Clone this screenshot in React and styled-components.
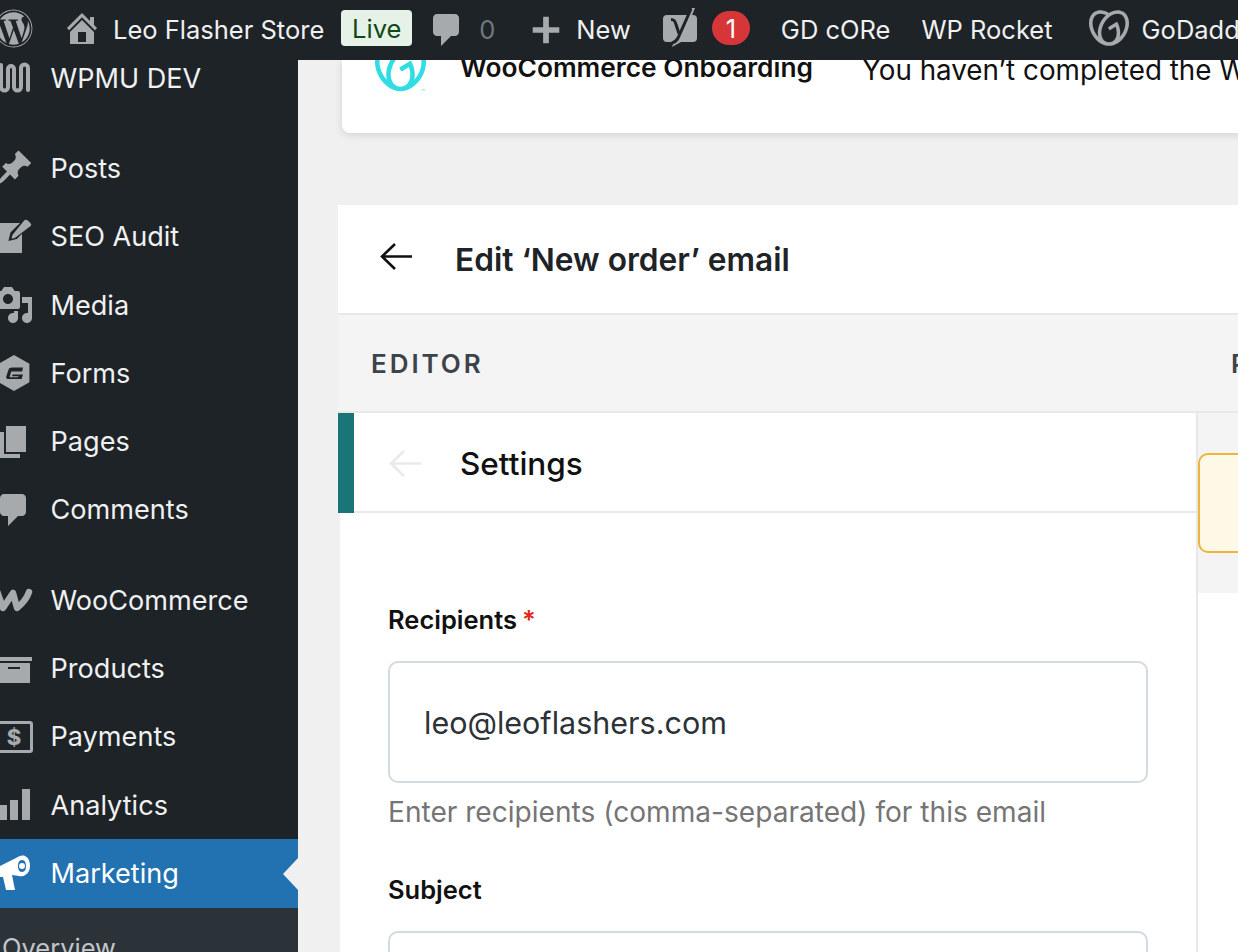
import React from "react";
import styled, { createGlobalStyle } from "styled-components";
import { FaWordpress } from "react-icons/fa";
import { SiGodaddy } from "react-icons/si";

const Global = createGlobalStyle`
  html, body { margin: 0; padding: 0; overflow: hidden; background: #f0f0f0; }
  * { box-sizing: border-box; }
  body { font-family: Inter, "Liberation Sans", sans-serif; }
`;

const Page = styled.div`
  width: 1238px;
  height: 952px;
  overflow: hidden;
  display: grid;
  grid-template-columns: 298px 940px;
  grid-template-rows: 60px 892px;
`;

const AdminBar = styled.header`
  grid-column: 1 / -1;
  background: #1d2327;
  color: #f0f0f1;
  display: flex;
  align-items: center;
  font-size: 25.5px;
  white-space: nowrap;
  overflow: hidden;
`;

const BarItem = styled.span`
  display: flex;
  align-items: center;
  flex: none;
  margin-top: -2px;
  margin-left: ${(p) => p.$ml || 0}px;
  color: ${(p) => p.$color || "#f0f0f1"};
`;

const BarIcon = styled.svg`
  flex: none;
  fill: #a7aaad;
  margin-left: ${(p) => p.$ml || 0}px;
  margin-top: ${(p) => p.$mt || 0}px;
`;

const WpLogo = styled(FaWordpress)`
  flex: none;
  margin-left: -6px;
  margin-top: -4px;
  color: #a7aaad;
`;

const GdLogo = styled(SiGodaddy)`
  flex: none;
  margin-left: ${(p) => p.$ml}px;
  margin-top: -4px;
  color: #a7aaad;
`;

const LiveBadge = styled.span`
  flex: none;
  width: 71px;
  height: 36px;
  margin-left: 17px;
  margin-top: -4px;
  border-radius: 4px;
  background: #e6f2e8;
  color: #0f4a16;
  display: flex;
  align-items: center;
  justify-content: center;
  font-size: 25.5px;
`;

const CountBadge = styled.span`
  flex: none;
  width: 38px;
  height: 34px;
  margin-left: 15px;
  margin-top: -4px;
  border-radius: 17px;
  background: #d63638;
  color: #fff;
  display: flex;
  align-items: center;
  justify-content: center;
  font-size: 25.5px;
`;

const Sidebar = styled.nav`
  background: #1d2327;
  color: #f0f0f1;
  font-size: 27.1px;
  overflow: hidden;
  display: flex;
  flex-direction: column;
`;

const MenuRow = styled.a`
  flex: none;
  height: ${(p) => p.$h || 68.33}px;
  margin-bottom: ${(p) => p.$mb || 0}px;
  display: flex;
  align-items: center;
  position: relative;
  padding-left: 50.5px;
  background: ${(p) => (p.$active ? "#2271b1" : "transparent")};
  color: ${(p) => (p.$active ? "#fff" : "#f0f0f1")};
`;

const MenuIcon = styled.svg`
  position: absolute;
  left: ${(p) => p.$left ?? -6}px;
  top: 50%;
  transform: translateY(-50%);
  overflow: visible;
  fill: ${(p) => (p.$active ? "#fff" : "#a7aaad")};
`;

const StrokeIcon = styled(MenuIcon)`
  fill: none;
  stroke: #a7aaad;
  stroke-linecap: round;
  stroke-linejoin: round;
  stroke-width: ${(p) => p.$sw}px;
`;

const ActiveArrow = styled.span`
  position: absolute;
  right: 0;
  top: 50%;
  transform: translateY(-50%);
  border: 16px solid transparent;
  border-right: 15px solid #f0f0f0;
  border-left: 0;
`;

const SubMenu = styled.div`
  flex: 1;
  background: #2c3338;
  color: #c3c4c7;
  font-size: 25.5px;
  padding: 24px 0 0 2px;
`;

const Main = styled.main`
  overflow: hidden;
  padding-left: 40px;
`;

const Notice = styled.section`
  width: 1000px;
  height: 73px;
  margin-left: 4px;
  margin-bottom: 72px;
  padding-left: 33px;
  background: #fff;
  border-radius: 0 0 8px 8px;
  box-shadow: 0 2px 8px rgba(0, 0, 0, 0.12);
  display: flex;
  align-items: flex-start;
  color: #111;
  white-space: nowrap;
`;

const NoticeBrand = styled.span`
  position: relative;
  flex: none;
  display: flex;
  width: 51px;
  height: 51px;
  margin-top: -17px;
  color: #2fdde2;
`;

const TradeMark = styled.span`
  position: absolute;
  right: 1px;
  bottom: -1px;
  font-size: 6px;
  line-height: 1;
`;

const NoticeTitle = styled.strong`
  flex: none;
  width: 400px;
  margin-left: 34px;
  margin-top: -8px;
  font-size: 26.3px;
  font-weight: 600;
  line-height: 32px;
`;

const NoticeText = styled.span`
  flex: none;
  margin-top: -8px;
  margin-left: 2px;
  font-size: 27.8px;
  line-height: 36px;
`;

const Editor = styled.section`
  width: 1100px;
  background: #fff;
`;

const EditorHead = styled.div`
  height: 110px;
  display: flex;
  align-items: center;
  padding-left: 42px;
  border-bottom: 2px solid #e8e8e8;
`;

const BackArrow = styled.svg`
  flex: none;
  fill: none;
  stroke: ${(p) => p.$color || "#111"};
  stroke-width: 2.6;
  margin-top: ${(p) => p.$mt || 0}px;
`;

const EditorTitle = styled.h1`
  margin: 0 0 0 43px;
  font-size: 31.7px;
  font-weight: 600;
  color: #1e2327;
`;

const Tabs = styled.div`
  height: 98px;
  display: grid;
  grid-template-columns: 860px 1fr;
  align-items: center;
  background: #f4f4f4;
  border-bottom: 2px solid #e8e8e8;
`;

const Tab = styled.span`
  padding-left: ${(p) => p.$pl}px;
  font-size: 26px;
  font-weight: 600;
  letter-spacing: 2.95px;
  color: #3c434a;
`;

const Columns = styled.div`
  display: grid;
  grid-template-columns: 860px 1fr;
  min-height: 560px;
`;

const LeftPanel = styled.div`
  border-left: 2px solid #f0f0f0;
  border-right: 2px solid #e8e8e8;
  margin-bottom: -20px;
`;

const PanelHead = styled.div`
  height: 100px;
  margin-left: -2px;
  display: flex;
`;

const Accent = styled.span`
  flex: none;
  width: 16px;
  background: #1a7676;
`;

const PanelBar = styled.div`
  flex: 1;
  display: flex;
  align-items: center;
  padding-left: 35px;
  border-bottom: 2px solid #e8e8e8;
`;

const PanelTitle = styled.h2`
  margin: 3px 0 0 39px;
  font-size: 31.5px;
  font-weight: 500;
  color: #111;
`;

const Form = styled.div`
  padding: 91px 48px 0 48px;
`;

const Label = styled.label`
  display: block;
  font-size: 25.5px;
  font-weight: 600;
  line-height: 32px;
  color: #111;
`;

const Required = styled.span`
  color: #e2231a;
  margin-left: 5px;
`;

const Field = styled.div`
  height: 122px;
  margin-top: 25px;
  padding-left: 34px;
  border: 2px solid #d3dae1;
  border-radius: 10px;
  display: flex;
  align-items: center;
  font-size: 30.5px;
  color: #2c3338;
`;

const Help = styled.p`
  margin: 13px 0 46px;
  font-size: 28.1px;
  line-height: 32px;
  color: #757575;
`;

const RightPanel = styled.div`
  height: 180px;
  padding-top: 40px;
  background: #f4f4f4;
`;

const Warning = styled.div`
  height: 100px;
  border: 2px solid #edb53b;
  border-radius: 10px;
  background: #fef8e7;
`;

const dashicons = [
  { label: "Posts", d: "M10.44 3.02l1.82-1.82 6.36 6.35-1.83 1.82c-1.05-.68-2.48-.57-3.41.36l-.75.75c-.92.93-1.04 2.35-.35 3.41l-1.83 1.82-2.41-2.41-2.8 2.79c-.42.42-3.38 2.71-3.8 2.29s1.86-3.39 2.28-3.81l2.79-2.79L4.1 9.36l1.83-1.82c1.05.69 2.48.57 3.41-.36l.75-.75c.93-.92 1.04-2.35.35-3.41z" },
  { label: "SEO Audit", d: "M3 3h10L8.200 7.800 7.200 12l4.200-1L14 8.400V18H3V3zM15.500 1.700a1 1 0 0 1 1.400 0l1.400 1.400a1 1 0 0 1 0 1.400l-7.700 5.900-1.800.5.400-1.900 6.300-7.800z" },
  { label: "Media", d: "M13 11V4c0-.55-.45-1-1-1h-1.670L9 1H5L3.670 3H2c-.55 0-1 .45-1 1v7c0 .55.45 1 1 1h10c.55 0 1-.45 1-1zM7 4.500c1.380 0 2.500 1.120 2.500 2.500S8.380 9.500 7 9.500 4.500 8.380 4.500 7 5.620 4.500 7 4.500zM14 6h5v10.500c0 1.380-1.120 2.500-2.500 2.500S14 17.880 14 16.500s1.120-2.500 2.500-2.500c.17 0 .34.020.5.050V9h-3V6zm-4 8.050V13h2v3.500c0 1.380-1.120 2.500-2.500 2.500S7 17.880 7 16.500 8.120 14 9.500 14c.17 0 .34.020.5.050z" },
  { label: "Forms", d: "M10 1l7.700 4.400v9.200L10 19l-7.700-4.400V5.400L10 1zM9 7.300c-1 0-1.500.4-1.800 1.200l-1 3c-.3 1 .1 1.500 1 1.500h6.600l.7-2.300H9.300l-.3.900h3.300l-.2.500H7.800l.8-2.800h5.500l.4-2H9z" },
  { label: "Pages", d: "M6 15V2h10v13H6zm-1 1h8v2H3V5h2v11z" },
  { label: "Comments", mb: 22, d: "M5 2h9c1.100 0 2 .9 2 2v7c0 1.100-.9 2-2 2h-2l-5 5v-5H5c-1.100 0-2-.9-2-2V4c0-1.100.9-2 2-2z" },
];

export default function App() {
  return (
    <Page>
      <Global />
      <AdminBar>
        <WpLogo size={39} />
        <BarIcon $ml={29} $mt={-4} width="40" height="40" viewBox="0 0 20 20">
          <path d="M16 8.500l1.530 1.530-1.060 1.060L10 4.620l-6.470 6.470-1.060-1.060L10 2.500l4 4v-2h2v4zm-6-2.460l6 5.990V18H4v-5.970zM12 17v-5H8v5h4z" fillRule="evenodd" />
        </BarIcon>
        <BarItem $ml={11}>Leo Flasher Store</BarItem>
        <LiveBadge>Live</LiveBadge>
        <BarIcon $ml={15} width="40" height="40" viewBox="0 0 20 20">
          <path d="M5 2h9c1.100 0 2 .9 2 2v7c0 1.100-.9 2-2 2h-2l-5 5v-5H5c-1.100 0-2-.9-2-2V4c0-1.100.9-2 2-2z" />
        </BarIcon>
        <BarItem $ml={12} $color="#72777c">0</BarItem>
        <BarIcon $ml={32} width="38" height="38" viewBox="0 0 20 20">
          <path d="M17 8.500v3h-5.500V17h-3v-5.500H3v-3h5.500V3h3v5.500H17z" />
        </BarIcon>
        <BarItem $ml={11}>New</BarItem>
        <BarIcon $ml={32} $mt={-5} width="34" height="39" viewBox="0 0 34 39">
          <rect x="0" y="7" width="34" height="27" rx="4" />
          <path d="M29 0l3 0-14 34-9 5 1-3 5-3z" />
          <path d="M8 11.500c3 0 4 1 5 5l3 9" fill="none" stroke="#1d2327" strokeWidth="3" />
          <path d="M28 1L15 30c-1 2-3 4-6 5" fill="none" stroke="#1d2327" strokeWidth="3" />
        </BarIcon>
        <CountBadge>1</CountBadge>
        <BarItem $ml={31}>GD cORe</BarItem>
        <BarItem $ml={31}>WP Rocket</BarItem>
        <GdLogo size={40} $ml={36} />
        <BarItem $ml={13}>GoDaddy</BarItem>
      </AdminBar>

      <Sidebar>
        <MenuRow $h={36} $mb={38.2}>
          <StrokeIcon $left={0} $sw={4} width="32" height="32" viewBox="0 0 32 32">
            <path d="M1 3V25a3.500 3.500 0 0 0 7 0V7a3 3 0 0 1 6 0V25a3.500 3.500 0 0 0 7 0V6a3.500 3.500 0 0 1 7 0V28" />
          </StrokeIcon>
          WPMU DEV
        </MenuRow>
        {dashicons.map((it) => (
          <MenuRow key={it.label} $mb={it.mb}>
            <MenuIcon width="40" height="40" viewBox="0 0 20 20">
              <path d={it.d} fillRule="evenodd" />
            </MenuIcon>
            {it.label}
          </MenuRow>
        ))}
        <MenuRow>
          <StrokeIcon $left={0} $sw={6.5} width="34" height="24" viewBox="0 0 34 24">
            <path d="M-3 3L3 20 13 5 17 20C22 16 27 10 29 4" />
          </StrokeIcon>
          WooCommerce
        </MenuRow>
        <MenuRow>
          <MenuIcon width="40" height="40" viewBox="0 0 20 20">
            <path fillRule="evenodd" d="M19 4v2H1V4h18zM2 7h16v10H2V7zm11 3V9H7v1h6z" />
          </MenuIcon>
          Products
        </MenuRow>
        <MenuRow>
          <MenuIcon width="40" height="40" viewBox="0 0 40 40">
            <path fillRule="evenodd" d="M3 4h33a3 3 0 0 1 3 3v26a3 3 0 0 1-3 3H3a3 3 0 0 1-3-3V7a3 3 0 0 1 3-3zm0 3v26h33V7H3z" />
            <text x="20" y="28" fontSize="22" fontWeight="800" textAnchor="middle" fontFamily="Inter, sans-serif">$</text>
          </MenuIcon>
          Payments
        </MenuRow>
        <MenuRow>
          <MenuIcon $left={-2} width="32" height="34" viewBox="0 0 32 34">
            <path d="M-2 17h11v15H-2zM12 12h8v20h-8zM24 1h8v31h-8z" />
          </MenuIcon>
          Analytics
        </MenuRow>
        <MenuRow $active $h={69}>
          <MenuIcon $active $left={-2} width="34" height="38" viewBox="0 0 34 38">
            <path fillRule="evenodd" d="M0 12L18 3c3-2 6-3 9-2 5 2 6 10 4 15-2 4-6 6-10 5l-7-1 3 15H8L5 22H0V12zm24-7c-3 0-4 3-4 6s1 6 4 6 4-3 4-6-1-6-4-6zm0 3a3 3 0 1 1 0 6 3 3 0 0 1 0-6z" />
          </MenuIcon>
          Marketing
          <ActiveArrow />
        </MenuRow>
        <SubMenu>Overview</SubMenu>
      </Sidebar>

      <Main>
        <Notice>
          <NoticeBrand>
            <SiGodaddy size={51} />
            <TradeMark>™</TradeMark>
          </NoticeBrand>
          <NoticeTitle>WooCommerce Onboarding</NoticeTitle>
          <NoticeText>You haven’t completed the WooCommerce onboarding</NoticeText>
        </Notice>
        <Editor>
          <EditorHead>
            <BackArrow $mt={-4} width="32" height="30" viewBox="0 0 32 30">
              <path d="M32 14.500H3M15 2L2 14.500 15 27" />
            </BackArrow>
            <EditorTitle>Edit ‘New order’ email</EditorTitle>
          </EditorHead>
          <Tabs>
            <Tab $pl={33}>EDITOR</Tab>
            <Tab $pl={33}>PREVIEW</Tab>
          </Tabs>
          <Columns>
            <LeftPanel>
              <PanelHead>
                <Accent />
                <PanelBar>
                  <BackArrow $mt={3} $color="#e8ebeb" width="32" height="30" viewBox="0 0 32 30">
                    <path d="M32 14.500H3M15 2L2 14.500 15 27" />
                  </BackArrow>
                  <PanelTitle>Settings</PanelTitle>
                </PanelBar>
              </PanelHead>
              <Form>
                <Label>Recipients<Required>*</Required></Label>
                <Field>leo@leoflashers.com</Field>
                <Help>Enter recipients (comma-separated) for this email</Help>
                <Label>Subject</Label>
                <Field />
              </Form>
            </LeftPanel>
            <RightPanel>
              <Warning />
            </RightPanel>
          </Columns>
        </Editor>
      </Main>
    </Page>
  );
}
